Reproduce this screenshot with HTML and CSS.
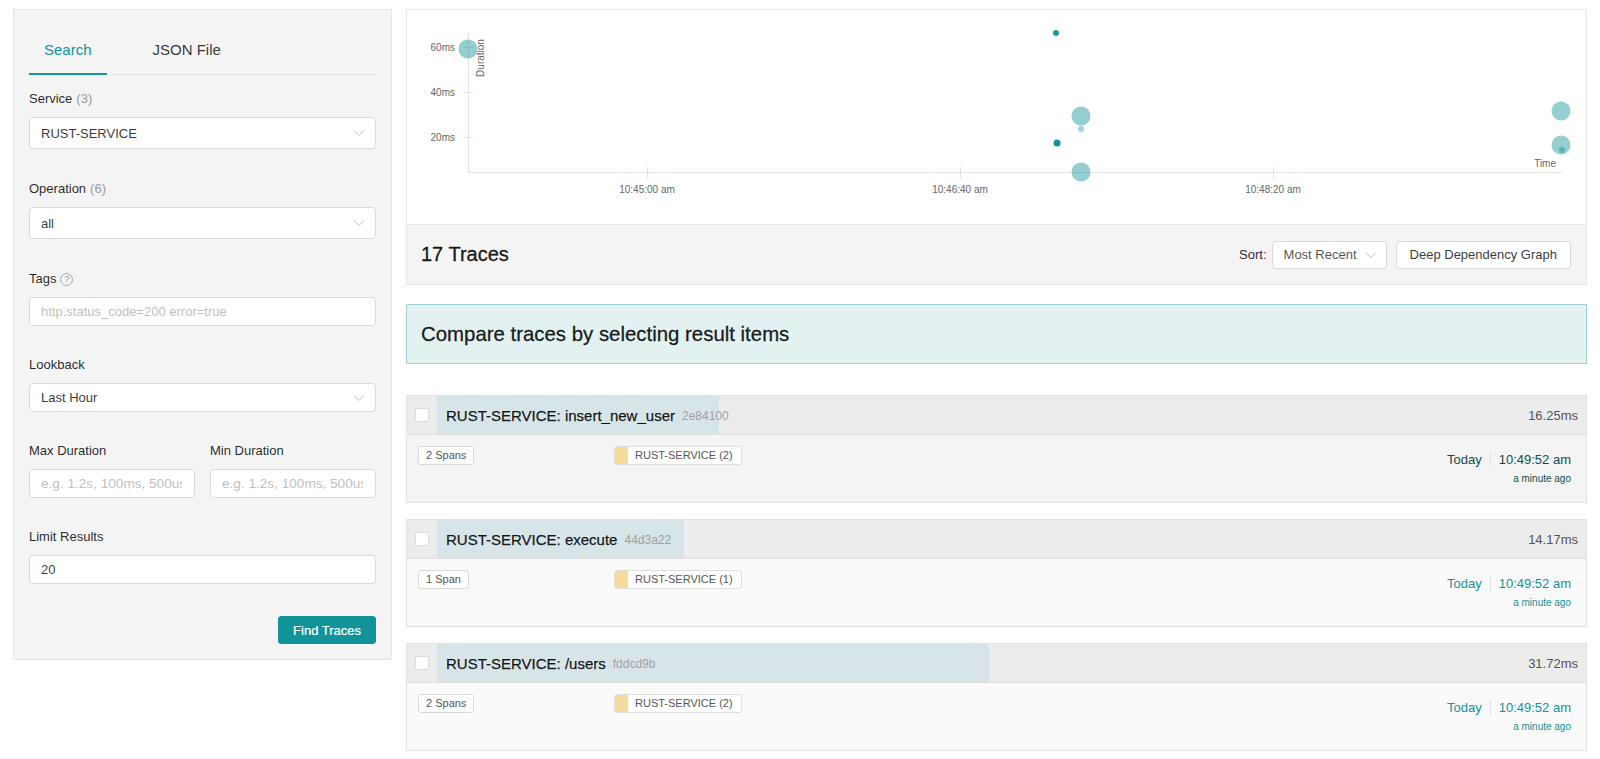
FILE: index.html
```html
<!DOCTYPE html>
<html lang="en">
<head>
<meta charset="utf-8">
<title>Jaeger UI - Search</title>
<link rel="stylesheet" href="styles.css">
</head>
<body>
<div class="page">
  <aside class="sidebar">
    <div class="tabs">
      <div class="tab active">Search</div>
      <div class="tab">JSON File</div>
    </div>
    <div class="form">
      <div class="field lg">
        <div class="label">Service <span class="count">(3)</span></div>
        <div class="select lg"><span>RUST-SERVICE</span><svg class="chev" width="12" height="8" viewBox="0 0 12 8"><path d="M1 1.5 L6 6.5 L11 1.5" fill="none" stroke="#bfbfbf" stroke-width="1"/></svg></div>
      </div>
      <div class="field lg">
        <div class="label">Operation <span class="count">(6)</span></div>
        <div class="select lg"><span>all</span><svg class="chev" width="12" height="8" viewBox="0 0 12 8"><path d="M1 1.5 L6 6.5 L11 1.5" fill="none" stroke="#bfbfbf" stroke-width="1"/></svg></div>
      </div>
      <div class="field">
        <div class="label">Tags <span class="help">?</span></div>
        <input class="input" type="text" placeholder="http.status_code=200 error=true">
      </div>
      <div class="field">
        <div class="label">Lookback</div>
        <div class="select"><span>Last Hour</span><svg class="chev" width="12" height="8" viewBox="0 0 12 8"><path d="M1 1.5 L6 6.5 L11 1.5" fill="none" stroke="#bfbfbf" stroke-width="1"/></svg></div>
      </div>
      <div class="field two">
        <div class="col">
          <div class="label">Max Duration</div>
          <input class="input narrow" type="text" placeholder="e.g. 1.2s, 100ms, 500us">
        </div>
        <div class="col">
          <div class="label">Min Duration</div>
          <input class="input narrow" type="text" placeholder="e.g. 1.2s, 100ms, 500us">
        </div>
      </div>
      <div class="field">
        <div class="label">Limit Results</div>
        <input class="input" type="text" value="20">
      </div>
      <div class="actions">
        <button class="btn-primary">Find Traces</button>
      </div>
    </div>
  </aside>

  <main class="results">
    <section class="chart-panel">
      <svg class="plot" width="1179" height="214" viewBox="0 0 1179 214">
        <g stroke="#e2e2e2" stroke-width="1" fill="none">
          <line x1="61.5" y1="23" x2="61.5" y2="162"/>
          <line x1="61" y1="162.5" x2="1155" y2="162.5"/>
          <line x1="56" y1="37.5" x2="66" y2="37.5"/>
          <line x1="56" y1="82.5" x2="66" y2="82.5"/>
          <line x1="56" y1="127.5" x2="66" y2="127.5"/>
          <line x1="240.5" y1="157" x2="240.5" y2="168"/>
          <line x1="553.5" y1="157" x2="553.5" y2="168"/>
          <line x1="866.5" y1="157" x2="866.5" y2="168"/>
        </g>
        <g font-family="Liberation Sans, Arial, sans-serif" font-size="10" fill="#666">
          <text x="48" y="41" text-anchor="end">60ms</text>
          <text x="48" y="86" text-anchor="end">40ms</text>
          <text x="48" y="131" text-anchor="end">20ms</text>
          <text x="240" y="183" text-anchor="middle">10:45:00 am</text>
          <text x="553" y="183" text-anchor="middle">10:46:40 am</text>
          <text x="866" y="183" text-anchor="middle">10:48:20 am</text>
          <text transform="translate(77 48) rotate(-90)" text-anchor="middle">Duration</text>
          <text x="1149" y="157" text-anchor="end">Time</text>
        </g>
        <g fill="#11939a">
          <circle cx="61" cy="39" r="9.5" fill-opacity="0.45"/>
          <circle cx="649" cy="23" r="3" fill-opacity="0.95"/>
          <circle cx="674" cy="106" r="9.5" fill-opacity="0.45"/>
          <circle cx="674" cy="119" r="3" fill-opacity="0.4"/>
          <circle cx="650" cy="133" r="3.5" fill-opacity="1"/>
          <circle cx="674" cy="162" r="9.5" fill-opacity="0.45"/>
          <circle cx="1154" cy="101" r="9.5" fill-opacity="0.45"/>
          <circle cx="1154" cy="135" r="9.5" fill-opacity="0.45"/>
          <circle cx="1155" cy="140" r="3" fill-opacity="0.45"/>
        </g>
      </svg>
      <div class="band">
        <h2 class="count-title">17 Traces</h2>
        <div class="band-tools">
          <span class="sort-label">Sort:</span>
          <div class="sort-select"><span>Most Recent</span><svg class="chev" width="12" height="8" viewBox="0 0 12 8"><path d="M1 1.5 L6 6.5 L11 1.5" fill="none" stroke="#bfbfbf" stroke-width="1"/></svg></div>
          <button class="btn">Deep Dependency Graph</button>
        </div>
      </div>
    </section>

    <div class="banner">Compare traces by selecting result items</div>

    <div class="trace-list">
      <article class="trace hovered">
        <header class="trace-head">
          <div class="check-cell"><span class="checkbox"></span></div>
          <div class="trace-bar" style="--w:24.5%">
            <span class="trace-title">RUST-SERVICE: insert_new_user</span>
            <span class="trace-id">2e84100</span>
            <span class="trace-dur">16.25ms</span>
          </div>
        </header>
        <div class="trace-body">
          <div class="spans-col"><span class="tag">2 Spans</span></div>
          <div class="svc-col"><span class="svc-tag"><span class="swatch"></span><span class="svc-name">RUST-SERVICE (2)</span></span></div>
          <div class="when">
            <div class="when-line"><span>Today</span><span class="sep"></span><span>10:49:52 am</span></div>
            <div class="ago">a minute ago</div>
          </div>
        </div>
      </article>

      <article class="trace">
        <header class="trace-head">
          <div class="check-cell"><span class="checkbox"></span></div>
          <div class="trace-bar" style="--w:21.5%">
            <span class="trace-title">RUST-SERVICE: execute</span>
            <span class="trace-id">44d3a22</span>
            <span class="trace-dur">14.17ms</span>
          </div>
        </header>
        <div class="trace-body">
          <div class="spans-col"><span class="tag">1 Span</span></div>
          <div class="svc-col"><span class="svc-tag"><span class="swatch"></span><span class="svc-name">RUST-SERVICE (1)</span></span></div>
          <div class="when">
            <div class="when-line"><span>Today</span><span class="sep"></span><span>10:49:52 am</span></div>
            <div class="ago">a minute ago</div>
          </div>
        </div>
      </article>

      <article class="trace">
        <header class="trace-head">
          <div class="check-cell"><span class="checkbox"></span></div>
          <div class="trace-bar" style="--w:48%">
            <span class="trace-title">RUST-SERVICE: /users</span>
            <span class="trace-id">fddcd9b</span>
            <span class="trace-dur">31.72ms</span>
          </div>
        </header>
        <div class="trace-body">
          <div class="spans-col"><span class="tag">2 Spans</span></div>
          <div class="svc-col"><span class="svc-tag"><span class="swatch"></span><span class="svc-name">RUST-SERVICE (2)</span></span></div>
          <div class="when">
            <div class="when-line"><span>Today</span><span class="sep"></span><span>10:49:52 am</span></div>
            <div class="ago">a minute ago</div>
          </div>
        </div>
      </article>
    </div>
  </main>
</div>
</body>
</html>
```

FILE: styles.css
```css
* { box-sizing: border-box; }

body {
  margin: 0;
  background: #fff;
  font-family: "Liberation Sans", Arial, Helvetica, sans-serif;
  color: rgba(0, 0, 0, 0.85);
  font-size: 13px;
}

.page {
  display: flex;
  align-items: flex-start;
  gap: 14px;
  padding: 9px 13px 0 13px;
}

/* ---------- Sidebar ---------- */
.sidebar {
  width: 379px;
  flex: none;
  background: #f4f4f4;
  border: 1px solid #e6e6e6;
  padding: 15px 15px 15px;
}

.tabs {
  display: flex;
  gap: 31px;
  height: 50px;
  border-bottom: 1px solid #e6e6e6;
}

.tab {
  height: 50px;
  padding: 0 15px;
  line-height: 49px;
  font-size: 15px;
  color: rgba(0, 0, 0, 0.8);
}

.tab.active {
  color: #11939a;
  border-bottom: 2px solid #11939a;
}

.form {
  padding-top: 14px;
}

.field {
  margin-bottom: 29px;
}

.field.lg {
  margin-bottom: 30px;
}

.field.two {
  display: grid;
  grid-template-columns: 1fr 1fr;
  column-gap: 15px;
}

.label {
  display: flex;
  align-items: center;
  gap: 4px;
  height: 20px;
  line-height: 20px;
  margin-bottom: 8px;
  font-size: 13px;
  color: rgba(0, 0, 0, 0.85);
}

.count {
  color: #999;
}

.help {
  display: inline-flex;
  align-items: center;
  justify-content: center;
  width: 13px;
  height: 13px;
  border: 1px solid #aaa;
  border-radius: 50%;
  font-size: 9px;
  line-height: 1;
  color: #999;
}

.select,
.input {
  display: flex;
  align-items: center;
  width: 100%;
  height: 29px;
  padding: 0 11px;
  background: #fff;
  border: 1px solid #d9d9d9;
  border-radius: 4px;
  font-family: inherit;
  font-size: 13px;
  color: rgba(0, 0, 0, 0.8);
}

.input.narrow {
  font-size: 13.6px;
  padding-right: 12px;
}

.select.lg {
  height: 32px;
}

.select span {
  flex: 1;
}

.chev {
  display: block;
  flex: none;
  margin-right: -1px;
}

.input {
  outline: none;
}

.input::placeholder {
  color: #bfbfbf;
}

.actions {
  display: flex;
  justify-content: flex-end;
  padding-top: 3px;
}

.btn-primary {
  height: 28px;
  padding: 0 14px;
  background: #11939a;
  border: 1px solid #11939a;
  border-radius: 3px;
  color: #fff;
  font-family: inherit;
  font-size: 13px;
  -webkit-text-stroke: 0.2px #fff;
}

/* ---------- Results ---------- */
.results {
  flex: 1;
  min-width: 0;
}

.chart-panel {
  border: 1px solid #e6e6e6;
}

.plot {
  display: block;
  background: #fff;
}

.band {
  display: flex;
  align-items: center;
  justify-content: space-between;
  height: 60px;
  padding: 0 15px 0 14px;
  background: #f4f4f4;
  border-top: 1px solid #e6e6e6;
}

.count-title {
  margin: 0;
  font-size: 20px;
  font-weight: normal;
  color: rgba(0, 0, 0, 0.88);
  -webkit-text-stroke: 0.35px rgba(0, 0, 0, 0.88);
}

.band-tools {
  display: flex;
  align-items: center;
}

.sort-label {
  font-size: 13px;
  margin-right: 5px;
  color: rgba(0, 0, 0, 0.85);
}

.sort-select {
  display: flex;
  align-items: center;
  gap: 6px;
  width: 115px;
  height: 28px;
  padding: 0 10px 0 11px;
  background: #fff;
  border: 1px solid #d9d9d9;
  border-radius: 4px;
  font-size: 13px;
  color: rgba(0, 0, 0, 0.7);
}

.sort-select span {
  flex: 1;
}

.btn {
  height: 28px;
  margin-left: 9px;
  padding: 0 13px;
  background: #fff;
  border: 1px solid #d9d9d9;
  border-radius: 4px;
  font-family: inherit;
  font-size: 13px;
  color: rgba(0, 0, 0, 0.8);
}

.banner {
  display: flex;
  align-items: center;
  height: 60px;
  margin-top: 19px;
  padding-left: 14px;
  background: #e3f1f1;
  border: 1px solid #9dd2d2;
  font-size: 20.4px;
  color: rgba(0, 0, 0, 0.88);
  -webkit-text-stroke: 0.3px rgba(0, 0, 0, 0.88);
}

.trace-list {
  margin-top: 31px;
  display: flex;
  flex-direction: column;
  gap: 16px;
}

.trace {
  border: 1px solid #e2e2e2;
}

.trace-head {
  display: flex;
  height: 39px;
  background: #ececec;
  border-bottom: 1px solid #dedede;
}

.check-cell {
  width: 30px;
  flex: none;
  display: flex;
  align-items: center;
  padding-left: 8px;
}

.checkbox {
  width: 14px;
  height: 14px;
  background: #fff;
  border: 1px solid #dcdcdc;
  border-radius: 2px;
}

.trace-bar {
  flex: 1;
  display: flex;
  align-items: center;
  padding: 0 8px 0 9px;
  background: linear-gradient(90deg, #d7e5e8 var(--w), transparent var(--w));
}

.trace-title {
  font-size: 15px;
  color: rgba(0, 0, 0, 0.9);
  -webkit-text-stroke: 0.25px rgba(0, 0, 0, 0.9);
}

.trace-id {
  margin-left: 7px;
  margin-top: 2px;
  font-size: 12px;
  color: #a0a0a0;
}

.trace-dur {
  margin-left: auto;
  font-size: 13px;
  color: #555;
}

.trace-body {
  display: flex;
  align-items: flex-start;
  height: 67px;
  padding: 11px 15px 0 11px;
  background: #fafafa;
}

.trace.hovered .trace-body {
  background: #f4f4f4;
}

.spans-col {
  width: 196px;
  flex: none;
}

.tag {
  display: inline-block;
  height: 19px;
  padding: 0 7px;
  line-height: 17px;
  background: #fff;
  border: 1px solid #d9d9d9;
  border-radius: 3px;
  font-size: 11px;
  color: #555;
}

.svc-tag {
  display: inline-flex;
  height: 19px;
  background: #fff;
  border: 1px solid #dedede;
  border-radius: 3px;
  overflow: hidden;
}

.swatch {
  width: 13px;
  background: #f7db9c;
}

.svc-name {
  padding: 0 8px 0 7px;
  line-height: 17px;
  font-size: 11px;
  color: #555;
}

.when {
  margin-left: auto;
  margin-top: 4px;
  text-align: right;
  color: #11939a;
}

.trace.hovered .when {
  color: #124b53;
}

.when-line {
  display: flex;
  align-items: center;
  justify-content: flex-end;
  height: 18px;
  font-size: 13px;
}

.sep {
  width: 1px;
  height: 15px;
  margin: 0 8px;
  background: #e0e0e0;
}

.ago {
  margin-top: 4px;
  font-size: 10px;
  line-height: 14px;
}
```
